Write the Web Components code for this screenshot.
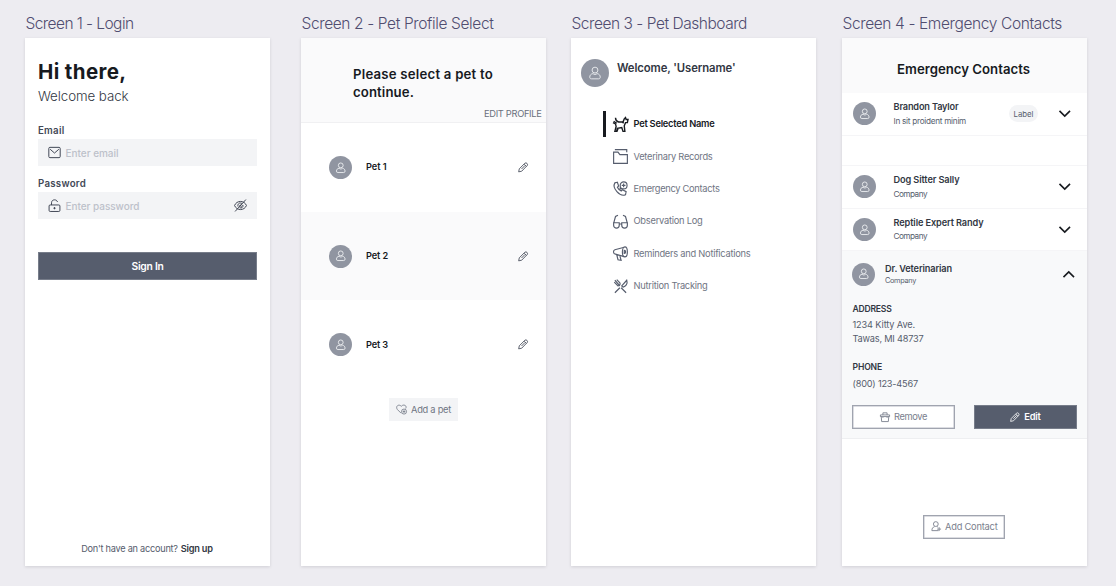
<!DOCTYPE html>
<html lang="en"><head><meta charset="utf-8"><title>Pet care screens</title>
<style>
body{margin:0;background:#edecf1;font-family:Inter,"Liberation Sans",sans-serif;overflow:hidden}
</style></head><body>
<pet-board></pet-board>
<script>
const shadow=(el,html)=>{el.attachShadow({mode:'open'}).innerHTML=html;};
const define=(tag,render)=>customElements.define(tag,class extends HTMLElement{
  connectedCallback(){if(!this.shadowRoot)shadow(this,render(this));}
});
const ICONS={
  user:'<circle cx="12" cy="7" r="5"/><path d="M8.5 13C5 13.500 3 16 3 19c0 2 1 3 3 3h12c2 0 3-1 3-3 0-3-2-5.500-5.500-6C13.500 15 10.500 15 8.500 13z"/>',
  mail:'<rect x="1.500" y="2.500" width="21" height="19" rx="2"/><path d="M4 6l8 7 8-7"/>',
  lock:'<rect x="2" y="11" width="20" height="12" rx="2"/><path d="M6.500 11V7c0-7 10-7 11-1.500M12 15v4M10 17h4"/>',
  eye:'<path d="M1 12C5 2 19 2 23 12 19 22 5 22 1 12z"/><path d="M22 1L2 23M7.500 14c-2-5 4-9 7.500-5M16.500 11c1 4-3 7-6 5M10 13l3-3M12 15l3-3"/>',
  pencil:'<path d="M1.500 22.500l1.500-7L16 2.500c3-2 7 2 5.500 5L8.500 21zM14 5l5 5M16 8L8 16"/>',
  heart:'<path d="M11 20L3 12C-2 5 6-1 11.500 5 17-1 25 4 21 10"/><circle cx="17.500" cy="16.500" r="5.500"/><path d="M17.500 13.500v6M14.500 16.500h6"/>',
  dog:'<path d="M4 1c0 4 2 6 5 7h7l2-5 2-2 1 3h3l-1 5h-3l-2 5 1 9h-3l-2-6-7 1-1 5H3l2-8-1-4-4-2"/><path d="M1 7l5 3M6 23l2-4M15 8l2 2"/>',
  folder:'<path d="M3 1h19v4M1 5h7l3 4h12v14H1z"/>',
  phone:'<path d="M7 2L3 3C-2 11 11 26 20 22l1-5-6-3-2 2c-3-1-5-4-6-6l2-2z"/><circle cx="17" cy="7" r="5.500"/><path d="M17 4v6M14 7h6M12 10l-1 3 4-1"/>',
  glasses:'<path d="M1 14h9v4c0 6-9 6-9 0zM14 14h9v4c0 6-9 6-9 0zM10 16h4M1 15L4 4l4-2M23 15L20 4l-4-2"/>',
  horn:'<path d="M18 2L3 6C0 7 0 13 4 13l14 4M6 14l2 8 5 1-2-7"/><ellipse cx="19" cy="9.500" rx="4" ry="8"/><path d="M18 7c3 0 3 5 0 5z"/>',
  food:'<path d="M3 22l8-8M14 11l8-9c2 6-2 10-6 11zM13 14l8 8M3 2l8 9M2 5l6 6c3 0 4-3 3-5L6 1M8 8L4 3"/>',
  trash:'<path d="M1 7h22v4H1zM3 11l1 12h16l1-12M7 7V2h10v5M7 12v2M17 12v2"/>',
  useradd:'<circle cx="11" cy="7" r="5.500"/><path d="M8 13c-4 1-6 4-6 9h15M14 13l2 1M18.500 14v9M14 18.500h9"/>',
  down:'<path d="M1 6l11 11L23 6"/>',
  up:'<path d="M1 17L12 6l11 11"/>'
};
define('pet-icon',e=>{const s=e.getAttribute('size')||16,w=e.getAttribute('stroke')||1;
  return `<style>:host{display:block;flex:none;width:${s}px;height:${s}px}svg{display:block;overflow:visible}</style>
  <svg width="${s}" height="${s}" viewBox="0 0 24 24" fill="none" stroke="currentColor" stroke-width="${w*24/s}">${ICONS[e.getAttribute('name')]}</svg>`});
define('pet-avatar',e=>{const s=e.getAttribute('size')||23;
  return `<style>:host{display:grid;place-items:center;flex:none;width:${s}px;height:${s}px;border-radius:50%;background:#9095a1;color:#eceef1}</style><pet-icon name="user" size="${s*.5}" stroke=".9"></pet-icon>`});
define('pet-field',e=>`<style>:host{display:block}
  .box{display:flex;align-items:center;height:27px;background:#f3f4f6;padding:0 10px;color:#424856}
  .hint{margin-left:4.500px;color:#bdc1ca}.end{display:block;margin-left:auto}</style>
  <pet-text size="9.700" weight="600" line="16" color="#424856" fit="${e.getAttribute('fit')}">${e.getAttribute('label')}</pet-text>
  <div class="box"><pet-icon name="${e.getAttribute('icon')}" size="13"></pet-icon>
  <pet-text class="hint" size="10" weight="500" line="16" fit="${e.getAttribute('hintfit')}"><slot></slot></pet-text><slot name="end" class="end"></slot></div>`);
define('pet-button',e=>`<style>:host{display:flex;align-items:center;justify-content:center;gap:4px;box-sizing:border-box;height:24px}
  :host([kind=solid]){background:#565d6d;color:#fff;border:1px solid #777d8a}
  :host([kind=outline]){background:#fff;color:#7a808d;border:1px solid #a0a4af;box-shadow:inset 0 0 0 .5px #b9bcc5}
  :host([kind=soft]){background:#f3f4f6;color:#6f7583}</style><slot></slot>`);
define('pet-column',e=>`<style>:host{display:block}
  header{height:38px;box-sizing:border-box;padding:13px 0 0 .5px}
  main{display:flex;flex-direction:column;width:245px;height:528px;background:#fff;box-shadow:0 1px 3px #171a1f20}</style>
  <header><pet-text size="15.500" weight="300" line="21" color="#504d70" fit="${e.getAttribute('fit')}">${e.getAttribute('label')}</pet-text></header><main><slot></slot></main>`);
define('pet-row',e=>`<style>:host{display:flex;align-items:center;height:88.700px;padding:0 17.500px 0 28px;color:#171a1f}
  :host([shade]){background:#fafafb}pet-text{margin-left:14px}.p{margin-left:auto;color:#424856}</style>
  <pet-avatar></pet-avatar><pet-text size="9.200" weight="600" line="14" fit="${e.getAttribute('fit')}"><slot></slot></pet-text><pet-icon class="p" name="pencil" size="10.500" stroke=".85"></pet-icon>`);
define('pet-nav',e=>`<style>:host{display:flex;align-items:center;height:32.400px;color:#565d6d}
  i{width:3px;height:26px;margin:0 7px 0 32px}:host([active]){color:#171a1f}:host([active]) i{background:#171a1f}pet-text{margin-left:5.500px}</style>
  <i></i><pet-icon name="${e.getAttribute('icon')}" size="15" stroke="${e.hasAttribute('active')?1.4:1.15}"></pet-icon>
  <pet-text size="9.300" weight="${e.hasAttribute('active')?600:400}" line="14" color="${e.hasAttribute('active')?'#171a1f':'#6f7583'}" fit="${e.getAttribute('fit')}"><slot></slot></pet-text>`);
define('pet-contact',e=>`<style>:host{display:flex;box-sizing:border-box;align-items:center;height:42.500px;padding:0 16.500px 0 11px;border-bottom:1px solid #f5f5f7}
  .t{margin-left:17.500px;padding-top:1px}slot[name=tag]{display:block;margin-left:auto}.c{margin-left:21px;color:#171a1f}</style>
  <pet-avatar></pet-avatar><div class="t"><pet-text size="9.200" weight="600" line="14.500" color="#323743" fit="${e.getAttribute('fit')}">${e.getAttribute('name')}</pet-text>
  <pet-text size="8.200" line="13.500" color="#565d6d" fit="${e.getAttribute('subfit')}">${e.getAttribute('sub')}</pet-text></div>
  <slot name="tag"></slot><pet-icon class="c" name="down" size="11.500" stroke="1.600"></pet-icon>`);
define('pet-tag',e=>`<style>:host{display:grid;place-items:center;width:29px;height:17px;border-radius:9px;background:#f3f4f6;color:#565d6d}</style><pet-text size="7.800" line="14" fit="20"><slot></slot></pet-text>`);
define('screen-login',e=>`<style>:host{display:flex;flex-direction:column;flex:1;padding:20px 13px 9px}
  .w{margin-top:-1px}.f{margin-top:16px}.g{margin-top:10px}pet-button{height:28px;margin-top:33px}p{display:flex;justify-content:center;gap:3px;margin:auto 1px 0 0}</style>
  <pet-text size="20.500" weight="650" line="28" color="#171a1f" fit="88.500">Hi there,</pet-text>
  <pet-text class="w" size="13.300" weight="300" line="22" color="#323743" fit="90.500">Welcome back</pet-text>
  <pet-field class="f" label="Email" fit="26.500" icon="mail" hintfit="53">Enter email</pet-field>
  <pet-field class="g" label="Password" fit="48" icon="lock" hintfit="74">Enter password<pet-icon slot="end" name="eye" size="13"></pet-icon></pet-field>
  <pet-button kind="solid"><pet-text size="10.300" weight="600" line="16" fit="32">Sign In</pet-text></pet-button>
  <p><pet-text size="9.200" line="16" color="#565d6d" fit="96.500">Don't have an account?</pet-text><pet-text size="9.200" weight="600" line="16" color="#323743" fit="32">Sign up</pet-text></p>`);
define('screen-pets',e=>`<style>:host{display:flex;flex-direction:column}
  header{box-sizing:border-box;height:85px;background:#fafafb;border-bottom:1px solid #f0f0f2;padding:27px 4.500px 0 52px}
  .e{width:max-content;margin:6px 0 0 auto}pet-button{width:69px;height:23px;margin:9px auto 0 88px}</style>
  <header><pet-text size="13.200" weight="600" line="18" color="#171a1f" fit="140">Please select a pet to</pet-text>
  <pet-text size="13.200" weight="600" line="18" color="#171a1f" fit="61">continue.</pet-text>
  <pet-text class="e" size="9.300" line="14" color="#6a707d" fit="57.500">EDIT PROFILE</pet-text></header>
  <pet-row fit="20.500">Pet 1</pet-row><pet-row shade fit="22">Pet 2</pet-row><pet-row fit="22">Pet 3</pet-row>
  <pet-button kind="soft"><pet-icon name="heart" size="11" stroke=".8"></pet-icon><pet-text size="9.300" line="15" fit="40">Add a pet</pet-text></pet-button>`);
define('screen-dashboard',e=>`<style>:host{display:block}header{display:flex;gap:8px;padding:21px 10px 0;height:49px}header pet-text{margin-top:1px}</style>
  <header><pet-avatar size="28"></pet-avatar><pet-text size="11.300" weight="600" line="16" color="#323743" fit="118.500">Welcome, 'Username'</pet-text></header>
  <pet-nav active icon="dog" fit="81">Pet Selected Name</pet-nav><pet-nav icon="folder" fit="79">Veterinary Records</pet-nav>
  <pet-nav icon="phone" fit="86">Emergency Contacts</pet-nav><pet-nav icon="glasses" fit="69">Observation Log</pet-nav>
  <pet-nav icon="horn" fit="117">Reminders and Notifications</pet-nav><pet-nav icon="food" fit="74">Nutrition Tracking</pet-nav>`);
define('screen-contacts',e=>`<style>:host{display:flex;flex-direction:column}
  header{display:grid;place-items:center;box-sizing:border-box;height:55px;padding:7px 2px 0 0;background:#fafafb}
  .gap{height:29.500px;border-bottom:1px solid #f5f5f7}
  section{box-sizing:border-box;height:188px;background:#f8f9fa;border-bottom:1.500px solid #eeeff1;padding:11px 10px 0}
  .top{display:flex;align-items:center;height:24px;margin-bottom:15px}.n{margin-left:10px}.c{margin:2px 3px 0 auto;color:#171a1f}
  .d{margin-left:.5px}.a{margin-top:1px}.ph{margin-top:14px}.n2{margin-top:3px}.b{display:flex;justify-content:space-between;margin-top:14px}.b pet-button{width:103px}
  .add{width:82px;margin:75.500px 0 0 81px}</style>
  <header><pet-text size="13.200" weight="600" line="18" color="#171a1f" fit="133">Emergency Contacts</pet-text></header>
  <pet-contact name="Brandon Taylor" fit="65" sub="In sit proident minim" subfit="72.500"><pet-tag slot="tag">Label</pet-tag></pet-contact>
  <div class="gap"></div>
  <pet-contact name="Dog Sitter Sally" fit="66" sub="Company" subfit="33.500"></pet-contact>
  <pet-contact name="Reptile Expert Randy" fit="90" sub="Company" subfit="33.500"></pet-contact>
  <section><div class="top"><pet-avatar></pet-avatar><div class="n"><pet-text size="9.200" weight="600" line="12" color="#323743" fit="67">Dr. Veterinarian</pet-text><pet-text size="7.300" line="11" color="#565d6d" fit="31">Company</pet-text></div><pet-icon class="c" name="up" size="11.500" stroke="1.600"></pet-icon></div>
  <div class="d"><pet-text size="8.600" weight="600" line="16" color="#323743" fit="39">ADDRESS</pet-text>
  <pet-text class="a" size="9.200" line="14" color="#565d6d" fit="62.500">1234 Kitty Ave.</pet-text><pet-text size="9.200" line="14" color="#565d6d" fit="71">Tawas, MI 48737</pet-text>
  <pet-text class="ph" size="8.600" weight="600" line="14" color="#323743" fit="29.500">PHONE</pet-text><pet-text class="n2" size="9.200" line="14" color="#565d6d" fit="65.500">(800) 123-4567</pet-text></div>
  <div class="b"><pet-button kind="outline"><pet-icon name="trash" size="10" stroke=".9"></pet-icon><pet-text size="9.300" line="14" fit="33">Remove</pet-text></pet-button><pet-button kind="solid"><pet-icon name="pencil" size="10" stroke=".8"></pet-icon><pet-text size="9.300" weight="600" line="14" fit="16.500">Edit</pet-text></pet-button></div></section>
  <pet-button class="add" kind="outline"><pet-icon name="useradd" size="10.500" stroke=".9"></pet-icon><pet-text size="9.300" line="14" fit="52.500">Add Contact</pet-text></pet-button>`);
define('pet-board',e=>`<style>:host{display:grid;grid-template-columns:276px 270px 271px 245px;box-sizing:border-box;height:586px;padding-left:25px}</style>
  <pet-column label="Screen 1 - Login" fit="108"><screen-login></screen-login></pet-column>
  <pet-column label="Screen 2 - Pet Profile Select" fit="192"><screen-pets></screen-pets></pet-column>
  <pet-column label="Screen 3 - Pet Dashboard" fit="175.500"><screen-dashboard></screen-dashboard></pet-column>
  <pet-column label="Screen 4 - Emergency Contacts" fit="219.500"><screen-contacts></screen-contacts></pet-column>`);
// A single line of text whose tracking is set so that it spans the "fit" width.
customElements.define('pet-text',class extends HTMLElement{
  connectedCallback(){
    if(this.shadowRoot)return;
    const a=n=>this.getAttribute(n);
    shadow(this,`<style>:host{display:block;white-space:nowrap;font-size:${a('size')}px;font-weight:${a('weight')||400};line-height:${a('line')}px;${a('color')?`color:${a('color')};`:''}}span{display:inline-block;vertical-align:top}</style><span><slot></slot></span>`);
    requestAnimationFrame(()=>this.fit());
    this.fit();
  }
  fit(){
    const s=this.shadowRoot.querySelector('span'),target=+this.getAttribute('fit');
    s.style.letterSpacing='0px';
    const text=this.shadowRoot.querySelector('slot').assignedNodes({flatten:true}).filter(n=>n.nodeType===3).map(n=>n.data).join('').trim();
    const w=s.getBoundingClientRect().width;
    if(w&&text)s.style.letterSpacing=(target-w)/text.length+'px';
  }
});
</script></body></html>
